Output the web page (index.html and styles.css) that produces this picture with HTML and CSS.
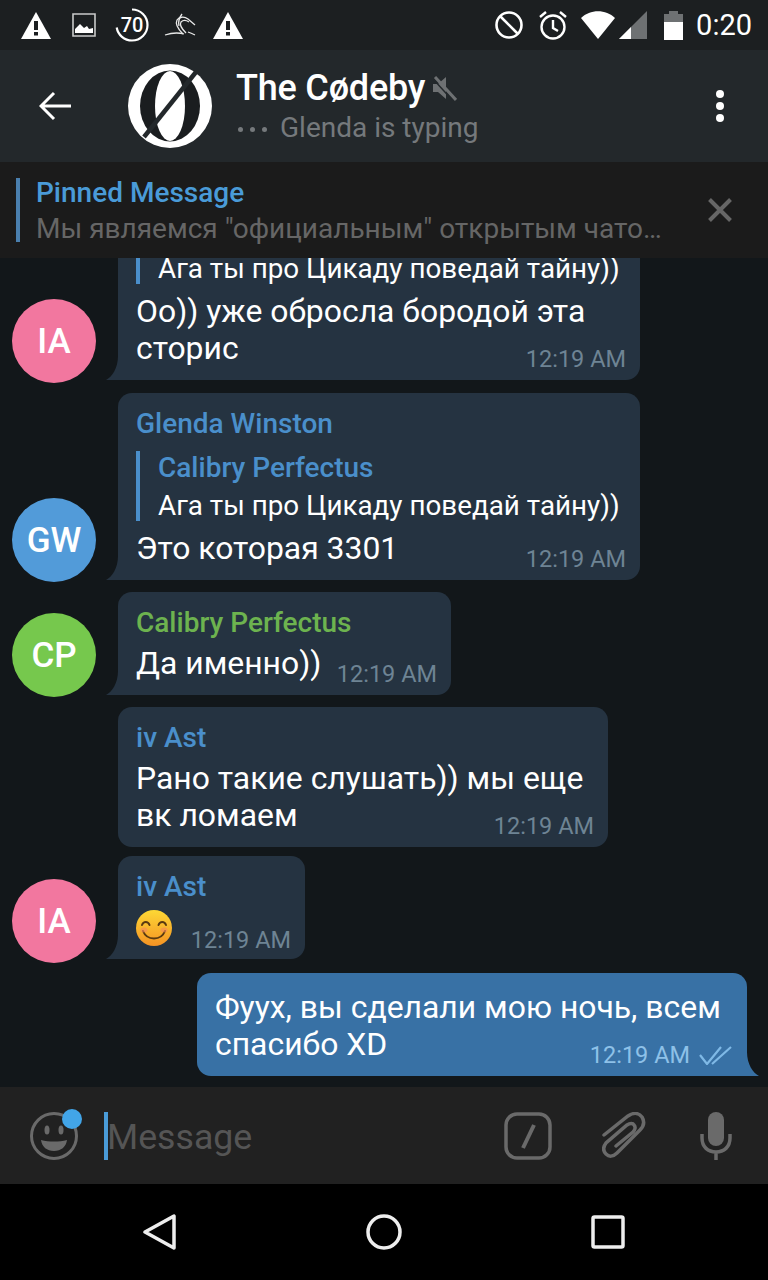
FILE: index.html
```html
<!DOCTYPE html>
<html lang="en">
<head>
<meta charset="UTF-8" />
<title>The Cødeby</title>
<link rel="stylesheet" href="styles.css">
</head>
<body>

<div class="phone">

  <div class="status-bar">
    <div class="status-left">
      <span class="slot"><svg width="30" height="27" viewBox="0 0 30 27"><path fill="#fff" d="M15 0 30 27H0Z"/><path fill="#1c1f21" d="M13 9h4v9h-4zM13 20h4v3.500h-4z"/></svg></span>
      <span class="slot"><svg width="24" height="24" viewBox="0 0 24 24"><path fill="none" stroke="#c9caca" stroke-width="1.6" d="M1 1h22v22H1z"/><path fill="#fff" d="M3 20v-4l5-5 4 4 3-2 2 3 4-1v5z"/></svg></span>
      <span class="slot"><svg width="34" height="34" viewBox="0 0 34 34"><circle cx="17" cy="17" r="15.500" fill="none" stroke="#fff" stroke-width="2.200" stroke-dasharray="70 100" transform="rotate(-90 17 17)"/><text x="17" y="24" class="badge-num" text-anchor="middle">70</text></svg></span>
      <span class="slot"><svg width="32" height="24" viewBox="0 0 32 24"><g fill="none" stroke="#e8e8e8" stroke-width="1.3"><path d="M1 22c6-2 12-3 19-1"/><path d="M19 21C14 16 11 11 13 7c2-3 7-4 11-1l7 6"/><path d="M22 20C18 16 15 12 17 9c2-2 5-2 8 0"/><path d="M15 13c-1-4 0-8 3-12"/><path d="M24 19c3 1 5 2 7 3"/></g></svg></span>
      <span class="slot"><svg width="30" height="27" viewBox="0 0 30 27"><path fill="#fff" d="M15 0 30 27H0Z"/><path fill="#1c1f21" d="M13 9h4v9h-4zM13 20h4v3.500h-4z"/></svg></span>
    </div>
    <div class="status-right">
      <svg width="28" height="28" viewBox="0 0 28 28"><circle cx="14" cy="14" r="12.500" fill="none" stroke="#fff" stroke-width="2.600"/><path stroke="#fff" stroke-width="2.600" d="M5 5l18 18"/></svg>
      <svg width="28" height="30" viewBox="0 0 28 30"><g fill="none" stroke="#fff" stroke-width="2.400"><circle cx="14" cy="17" r="11.500"/><path d="M14 10v8l5 3M1 7l6-5M27 7l-6-5"/></g></svg>
      <svg width="34" height="28" viewBox="0 0 34 28"><path fill="#fff" d="M0 7C9-2 25-2 34 7L17 28Z"/></svg>
      <svg width="28" height="28" viewBox="0 0 28 28"><path fill="#6e7173" d="M28 0V28H0Z"/><path fill="#fff" d="M12 16V28H0Z"/></svg>
      <svg width="19" height="29" viewBox="0 0 19 29"><path fill="#6e7173" d="M5 0h9v3h5v8H0V3h5z"/><path fill="#fff" d="M0 11h19v18H0z"/></svg>
      <span class="clock">0:20</span>
    </div>
  </div>

  <header class="chat-header">
    <svg class="back" width="32" height="30" viewBox="0 0 32 30"><path fill="none" stroke="#fff" stroke-width="3" d="M32 15H3M15 2 2 15l13 13"/></svg>
    <svg class="chat-logo" width="84" height="84" viewBox="0 0 84 84">
      <circle cx="42" cy="42" r="42" fill="#fff"/>
      <ellipse cx="42" cy="42" rx="30" ry="35.500" fill="#1a1d1f"/>
      <ellipse cx="42" cy="42" rx="15" ry="35" fill="#fff"/>
      <path stroke="#23282b" stroke-width="4.500" d="M68 8 16 73"/>
    </svg>
    <div class="chat-title">
      <div class="title-line">
        <span class="title">The Cødeby</span>
        <svg width="24" height="25" viewBox="0 0 24 25"><path fill="#6e7173" d="M0 8h5l8-7v22l-8-7H0z"/><path stroke="#6e7173" stroke-width="3" d="M2 1l21 23"/><path stroke="#23282b" stroke-width="1.500" d="M0 3l21 23"/></svg>
      </div>
      <div class="typing"><span class="typing-dots"><i></i><i></i><i></i></span>Glenda is typing</div>
    </div>
    <div class="kebab"><i></i><i></i><i></i></div>
  </header>

  <div class="pinned">
    <div class="pinned-bar"></div>
    <div class="pinned-text">
      <div class="pinned-title">Pinned Message</div>
      <div class="pinned-body">Мы являемся "официальным" открытым чато…</div>
    </div>
    <svg width="24" height="24" viewBox="0 0 24 24"><path stroke="#666" stroke-width="4" d="M1.500 1.500l21 21M22.500 1.500l-21 21"/></svg>
  </div>

  <main class="messages">

    <!-- top of this bubble is scrolled away under the pinned bar -->
    <div class="row gap-13">
      <div class="avatar low-3 pink">IA</div>
      <div class="bubble bubble-cut w-522">
        <div class="reply reply-cut">
          <div class="reply-text">Ага ты про Цикаду поведай тайну))</div>
        </div>
        <div class="line">Оо)) уже обросла бородой эта</div>
        <div class="line-last"><span>сторис</span><span class="time">12:19 AM</span></div>
      </div>
    </div>

    <div class="row gap-12">
      <div class="avatar blue">GW</div>
      <div class="bubble w-522">
        <div class="name">Glenda Winston</div>
        <div class="reply">
          <div class="reply-name">Calibry Perfectus</div>
          <div class="reply-text">Ага ты про Цикаду поведай тайну))</div>
        </div>
        <div class="line-last"><span>Это которая 3301</span><span class="time">12:19 AM</span></div>
      </div>
    </div>

    <div class="row gap-12">
      <div class="avatar green">CP</div>
      <div class="bubble w-333">
        <div class="name name-green">Calibry Perfectus</div>
        <div class="line-last"><span>Да именно))</span><span class="time">12:19 AM</span></div>
      </div>
    </div>

    <div class="row gap-9">
      <div class="avatar-space"></div>
      <div class="bubble no-tail w-490">
        <div class="name">iv Ast</div>
        <div class="line">Рано такие слушать)) мы еще</div>
        <div class="line-last"><span>вк ломаем</span><span class="time">12:19 AM</span></div>
      </div>
    </div>

    <div class="row gap-14">
      <div class="avatar low-4 pink">IA</div>
      <div class="bubble w-187">
        <div class="name">iv Ast</div>
        <div class="line-last">
          <svg class="smile" width="36" height="36" viewBox="0 0 36 36">
            <defs><linearGradient id="sm" x1="0" y1="0" x2="0" y2="1"><stop offset="0" stop-color="#fdd835"/><stop offset="1" stop-color="#f59324"/></linearGradient></defs>
            <circle cx="18" cy="18" r="18" fill="url(#sm)"/>
            <g fill="none" stroke="#5a3a10" stroke-width="2" stroke-linecap="round"><path d="M6 15c1.500-4 6-4 7.500 0M22.500 15c1.500-4 6-4 7.500 0M7 21c4 10 18 10 22 0"/></g>
            <ellipse cx="8" cy="20" rx="3.500" ry="2.500" fill="#f58a5a" opacity=".6"/><ellipse cx="28" cy="20" rx="3.500" ry="2.500" fill="#f58a5a" opacity=".6"/>
          </svg>
          <span class="time time-low">12:19 AM</span>
        </div>
      </div>
    </div>

    <div class="row row-out">
      <div class="bubble bubble-out w-550">
        <div class="line">Фуух, вы сделали мою ночь, всем</div>
        <div class="line-last">
          <span>спасибо XD</span>
          <span class="time time-out">12:19 AM
            <svg width="33" height="19" viewBox="0 0 33 19"><g fill="none" stroke="#7fb9e6" stroke-width="2.200"><path d="M1 9l7 9L22 1"/><path d="M13 18 32 1"/></g></svg>
          </span>
        </div>
      </div>
    </div>

  </main>

  <div class="composer">
    <div class="emoji-btn">
      <svg width="48" height="48" viewBox="0 0 48 48"><circle cx="24" cy="24" r="22.500" fill="none" stroke="#6a6a6a" stroke-width="3"/><ellipse cx="17" cy="18" rx="2.500" ry="4.500" fill="#6a6a6a"/><ellipse cx="31" cy="18" rx="2.500" ry="4.500" fill="#6a6a6a"/><path fill="#6a6a6a" d="M11 28c8 2 18 2 26 0-1 7-6 11-13 11S12 35 11 28Z"/></svg>
      <span class="emoji-dot"></span>
    </div>
    <div class="caret"></div>
    <div class="placeholder">Message</div>
    <svg class="tool" width="48" height="48" viewBox="0 0 48 48"><rect x="2" y="2" width="44" height="44" rx="11" fill="none" stroke="#6a6a6a" stroke-width="3.500"/><path stroke="#6a6a6a" stroke-width="4" d="M30 13 19 36"/></svg>
    <svg class="tool" width="44" height="47" viewBox="0 0 44 47"><path fill="none" stroke="#6a6a6a" stroke-width="3.500" stroke-linecap="round" d="M2 23 26 4c6-4 11-3 14 1 3 5 2 9-2 13L15 41c-4 4-8 4-11 1-3-3-3-7 0-11l21-18c3-2 6-2 7 0 2 2 1 5-1 7L14 34"/></svg>
    <svg class="tool" width="32" height="48" viewBox="0 0 32 48"><rect x="8" y="0" width="16" height="34" rx="8" fill="#6a6a6a"/><path fill="none" stroke="#6a6a6a" stroke-width="3.500" d="M2 22v4c0 9 6 14 14 14s14-5 14-14v-4M16 40v8"/></svg>
  </div>

  <nav class="nav-bar">
    <svg width="34" height="38" viewBox="0 0 34 38"><path fill="none" stroke="#eee" stroke-width="3.500" stroke-linejoin="round" d="M31 3v32L2 19Z"/></svg>
    <svg width="36" height="36" viewBox="0 0 36 36"><circle cx="18" cy="18" r="16" fill="none" stroke="#eee" stroke-width="3.500"/></svg>
    <svg width="34" height="34" viewBox="0 0 34 34"><rect x="2" y="2" width="30" height="30" rx="1.500" fill="none" stroke="#eee" stroke-width="3.500"/></svg>
  </nav>

</div>

</body>
</html>
```

FILE: styles.css
```css
/* Reset & base */
*, *::before, *::after {
  box-sizing: border-box;
}
html, body {
  margin: 0;
  background: #000;
}
body {
  font-family: Roboto, "Noto Sans", sans-serif;
  color: #fff;
}
svg {
  display: block;
  flex: none;
}
.phone {
  width: 768px;
  height: 1280px;
  display: flex;
  flex-direction: column;
  overflow: hidden;
}

/* Status bar */
.status-bar {
  height: 50px;
  flex: none;
  display: flex;
  justify-content: space-between;
  align-items: center;
  background: #1c1f21;
  padding: 0 16px 0 12px;
}
.status-left {
  display: flex;
  align-items: center;
}
.slot {
  width: 48px;
  display: flex;
  justify-content: center;
}
.badge-num {
  fill: #fff;
  font-size: 20px;
  font-weight: 500;
  font-family: Roboto, sans-serif;
}
.status-right {
  display: flex;
  align-items: center;
}
.status-right svg:nth-child(2) {
  margin-left: 16px;
}
.status-right svg:nth-child(3) {
  margin-left: 14px;
}
.status-right svg:nth-child(4) {
  margin-left: 4px;
}
.status-right svg:nth-child(5) {
  margin-left: 17px;
}
.clock {
  font-size: 29px;
  margin-left: 13px;
}

/* Header */
.chat-header {
  height: 112px;
  flex: none;
  display: flex;
  align-items: center;
  background: #23282b;
  padding-left: 39px;
}
.back {
  margin-right: 57px;
}
.chat-logo {
  margin-right: 24px;
}
.chat-title {
  flex: 1;
}
.title-line {
  display: flex;
  align-items: center;
  gap: 8px;
  height: 44px;
}
.title {
  font-size: 36px;
  font-weight: 500;
  letter-spacing: -0.2px;
}
.typing {
  display: flex;
  align-items: center;
  font-size: 28px;
  line-height: 36px;
  color: #75797c;
}
.typing-dots {
  display: flex;
  gap: 7px;
  margin: 2px 13px 0 2px;
}
.typing-dots i {
  width: 5px;
  height: 5px;
  border-radius: 50%;
  background: #75797c;
}
.kebab {
  display: flex;
  flex-direction: column;
  gap: 4px;
  margin-right: 44px;
}
.kebab i {
  width: 8px;
  height: 8px;
  border-radius: 50%;
  background: #fff;
}

/* Pinned */
.pinned {
  height: 96px;
  flex: none;
  display: flex;
  align-items: center;
  background: #1b1b1b;
  padding: 0 36px 0 16px;
}
.pinned-bar {
  width: 4px;
  height: 64px;
  background: #4a7fae;
  margin-right: 16px;
}
.pinned-text {
  flex: 1;
  margin-top: 4px;
}
.pinned-title {
  font-size: 28px;
  font-weight: 500;
  line-height: 34px;
  color: #4a9bd8;
}
.pinned-body {
  font-size: 28px;
  line-height: 38px;
  color: #666;
  white-space: nowrap;
}

/* Messages */
.messages {
  flex: 1;
  min-height: 0;
  display: flex;
  flex-direction: column;
  justify-content: flex-end;
  overflow: hidden;
  background: #12171a;
  padding-bottom: 11px;
}
.row {
  display: flex;
  align-items: flex-end;
  flex: none;
  padding-left: 12px;
}
.gap-13 { margin-bottom: 13px; }
.gap-12 { margin-bottom: 12px; }
.gap-9 { margin-bottom: 9px; }
.gap-14 { margin-bottom: 14px; }
.row-out {
  justify-content: flex-end;
  padding-right: 21px;
}
.avatar, .avatar-space {
  width: 84px;
  height: 84px;
  flex: none;
  margin-right: 22px;
}
.avatar {
  border-radius: 50%;
  margin-bottom: -2px;
  display: flex;
  align-items: center;
  justify-content: center;
  font-size: 35px;
  font-weight: 500;
}
.avatar.low-3 { margin-bottom: -3px; }
.avatar.low-4 { margin-bottom: -4px; }
.pink { background: #f2779f; }
.blue { background: #529bd9; }
.green { background: #76c84d; }

.bubble {
  position: relative;
  background: #253341;
  border-radius: 14px;
  border-bottom-left-radius: 0;
  padding: 11px 14px 13px 18px;
  font-size: 31.900px;
  line-height: 37px;
}
.bubble::before {
  content: "";
  position: absolute;
  left: -12px;
  bottom: 0;
  width: 12px;
  height: 24px;
  background: inherit;
  clip-path: path("M12 0V24H0C6 21 12 12 12 0Z");
}
.bubble.no-tail {
  border-bottom-left-radius: 14px;
}
.bubble.no-tail::before {
  display: none;
}
.bubble-cut {
  padding-top: 0;
  border-top-left-radius: 0;
  border-top-right-radius: 0;
}
.bubble-out {
  background: #3871a5;
  border-bottom-left-radius: 14px;
  border-bottom-right-radius: 0;
  padding-top: 16px;
  padding-right: 15px;
}
.bubble-out::before {
  left: auto;
  right: -12px;
  clip-path: path("M0 0V24H12C6 21 0 12 0 0Z");
}
.w-522 { width: 522px; }
.w-333 { width: 333px; }
.w-490 { width: 490px; }
.w-187 { width: 187px; }
.w-550 { width: 550px; }

.name {
  font-size: 28px;
  font-weight: 500;
  color: #4a8fcb;
  margin-bottom: 5px;
  position: relative;
  top: 1px;
}
.name-green {
  color: #6db34f;
}
.reply {
  height: 70px;
  margin: 10px 0 9px;
  padding-left: 18px;
  border-left: 4px solid #4a8fcb;
}
.reply-name {
  font-size: 28px;
  font-weight: 500;
  line-height: 34px;
  color: #4a8fcb;
}
.reply-text {
  font-size: 27.800px;
  line-height: 30px;
  margin-top: 6px;
  white-space: nowrap;
}
.reply-cut {
  height: auto;
  margin-top: 0;
}
.reply-cut .reply-text {
  margin-top: 0;
}
.line {
  white-space: nowrap;
}
.line-last {
  display: flex;
  justify-content: space-between;
  align-items: flex-end;
  min-height: 37px;
  white-space: nowrap;
}
.time {
  display: flex;
  align-items: center;
  gap: 9px;
  height: 26px;
  line-height: 26px;
  margin-bottom: -5px;
  font-size: 23.500px;
  color: #6e8494;
}
.time-low {
  margin-bottom: -7px;
}
.time-out {
  color: #8ec1e8;
}

/* Composer */
.composer {
  height: 97px;
  flex: none;
  display: flex;
  align-items: center;
  background: #212121;
  padding-left: 30px;
}
.emoji-btn {
  position: relative;
  margin-right: 26px;
}
.emoji-dot {
  position: absolute;
  top: -3px;
  left: 32px;
  width: 20px;
  height: 20px;
  border-radius: 50%;
  background: #42a5e8;
}
.caret {
  width: 4px;
  height: 48px;
  background: #4a9bd8;
}
.placeholder {
  flex: 1;
  font-size: 35.700px;
  color: #555;
  margin-left: -1px;
  padding-top: 3px;
}
.tool {
  margin-right: 50px;
}
.composer .tool:last-child {
  margin-right: 36px;
}
.composer .tool:nth-last-child(2) {
  margin-right: 54px;
}

/* Navigation */
.nav-bar {
  height: 96px;
  flex: none;
  display: flex;
  align-items: center;
  background: #000;
  padding: 0 143px;
  justify-content: space-between;
}
```
